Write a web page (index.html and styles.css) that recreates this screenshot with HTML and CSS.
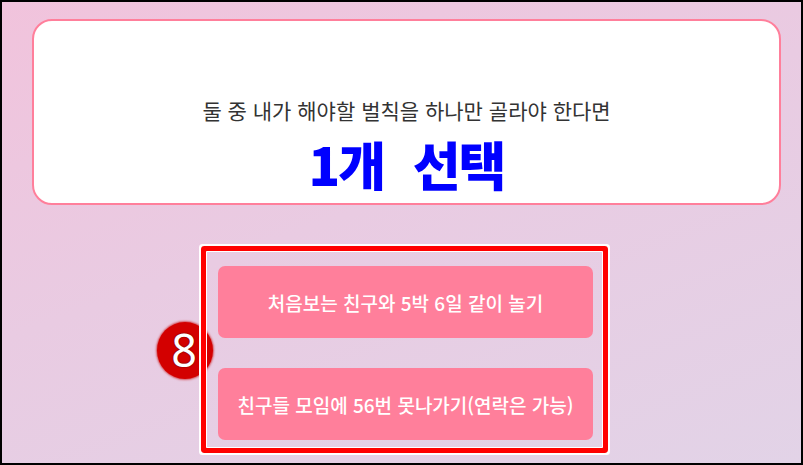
FILE: index.html
```html
<!DOCTYPE html>
<html lang="ko">
<head>
<meta charset="utf-8">
<title>벌칙 선택</title>
<link rel="stylesheet" href="styles.css">
</head>
<body>
<div class="screen">
  <section class="card">
    <p class="question">둘 중 내가 해야할 벌칙을 하나만 골라야 한다면</p>
    <h1 class="title">1개 <span class="title-word">선택</span></h1>
  </section>
  <div class="choices-wrap">
    <div class="badge"><span class="badge-num">8</span></div>
    <div class="choices">
      <button class="choice">처음보는 친구와 5박 6일 같이 놀기</button>
      <button class="choice">친구들 모임에 56번 못나가기(연락은 가능)</button>
    </div>
  </div>
</div>
</body>
</html>
```

FILE: styles.css
```css
* { box-sizing: border-box; }
html, body { margin: 0; padding: 0; }
body {
  width: 803px;
  height: 465px;
  overflow: hidden;
  font-family: "Noto Sans CJK KR", "Noto Sans", sans-serif;
}
.screen {
  width: 803px;
  height: 465px;
  border: 2px solid #000;
  background: linear-gradient(160deg, #f1c3dc 0%, #e9cbe2 45%, #e2d3e7 100%);
  padding-top: 17px;
}
.card {
  margin-left: 30px;
  width: 749px;
  height: 186px;
  background: #fff;
  border: 2px solid #ff7f9b;
  border-radius: 20px;
  display: flex;
  flex-direction: column;
  align-items: center;
  padding-top: 75px;
}
.question {
  margin: 0;
  font-size: 21px;
  letter-spacing: 0;
  line-height: 28px;
  color: #333;
  font-weight: 400;
}
.title {
  margin: 12px 0 0;
  font-size: 52px;
  line-height: 56px;
  font-weight: 900;
  color: #0000ff;
  letter-spacing: -2px;
  word-spacing: 16px;
}
.choices-wrap {
  position: relative;
  margin-top: 46px;
  margin-left: 204px;
  width: 397px;
}
.badge {
  position: absolute;
  left: -49px;
  top: 71px;
  width: 56px;
  height: 57px;
  border-radius: 50%;
  background: #d30000;
  box-shadow: 0 0 2px 1px rgba(200, 0, 0, 0.6);
  display: flex;
  align-items: center;
  justify-content: center;
}
.badge-num {
  font-family: "Noto Sans", "DejaVu Sans", sans-serif;
  font-size: 45px;
  line-height: 1;
  font-weight: 400;
  color: #fff;
  text-shadow: 0 0 2px #7a0000, 0 0 1px #7a0000;
  margin-top: -2px;
  margin-left: -2px;
}
.choices {
  position: relative;
  width: 397px;
  height: 197px;
  border: 1px solid #fff;
  box-shadow: 0 0 0 5px #ff0000, 0 0 0 7px #fff;
  border-radius: 1px;
  padding: 14px 0 0 11px;
  display: flex;
  flex-direction: column;
  gap: 30px;
}
.choice {
  width: 375px;
  height: 72px;
  border: none;
  border-radius: 7px;
  background: #ff7f9b;
  color: #fff;
  font-family: "Noto Sans CJK KR", "Noto Sans", sans-serif;
  font-size: 19px;
  font-weight: 500;
  padding: 0;
  cursor: pointer;
}
```
